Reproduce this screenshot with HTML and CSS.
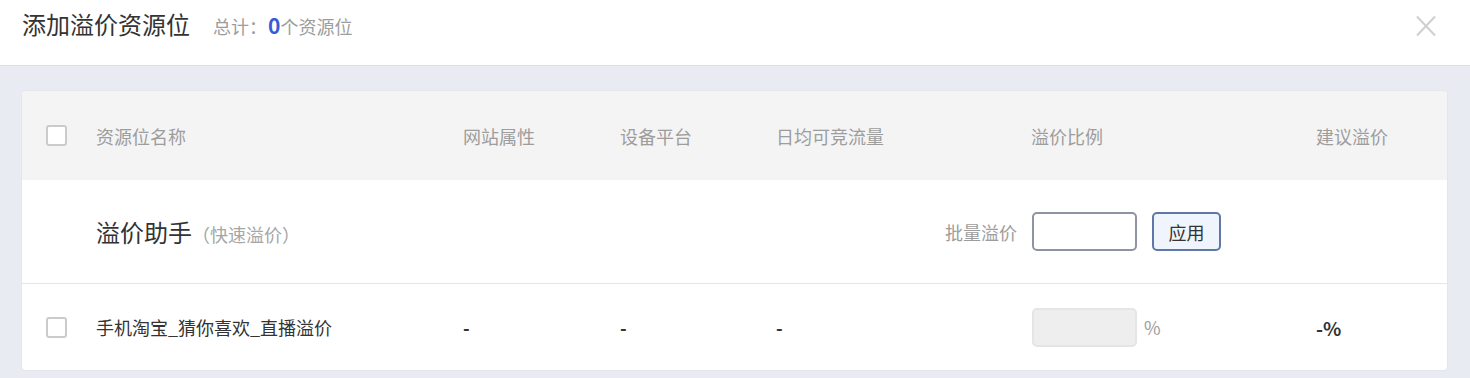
FILE: index.html
```html
<!DOCTYPE html>
<html lang="zh-CN">
<head>
<meta charset="utf-8">
<title>添加溢价资源位</title>
<link rel="stylesheet" href="styles.css">
</head>
<body>
<div class="dialog">
  <header class="dlg-head">
    <h1 class="dlg-title">添加溢价资源位</h1>
    <span class="dlg-total">总计：<b class="dlg-count">0</b>个资源位</span>
    <button class="dlg-close" type="button" aria-label="关闭">
      <svg width="20" height="22" viewBox="0 0 20 22"><path d="M1 1.5 L19 20.5 M19 1.5 L1 20.5" stroke="#cfcfcf" stroke-width="2" fill="none"/></svg>
    </button>
  </header>
  <main class="dlg-body">
    <section class="card">
      <div class="row row-head">
        <span class="cb"></span>
        <span class="c-name">资源位名称</span>
        <span>网站属性</span>
        <span>设备平台</span>
        <span>日均可竞流量</span>
        <span>溢价比例</span>
        <span>建议溢价</span>
      </div>
      <div class="row row-helper">
        <span class="helper-title">溢价助手<em class="helper-sub">（快速溢价）</em></span>
        <span class="helper-label">批量溢价</span>
        <span class="helper-ctrl">
          <input class="inp" type="text">
          <button class="btn-apply" type="button">应用</button>
        </span>
      </div>
      <div class="row row-data">
        <span class="cb"></span>
        <span class="c-name name-text">手机淘宝_猜你喜欢_直播溢价</span>
        <span class="dash">-</span>
        <span class="dash">-</span>
        <span class="dash">-</span>
        <span class="ratio"><input class="inp inp-disabled" type="text" disabled><span class="pct">%</span></span>
        <span class="dash dash-pct">-%</span>
      </div>
    </section>
  </main>
</div>
</body>
</html>
```

FILE: styles.css
```css
html, body {
  margin: 0;
  padding: 0;
}
body {
  font-family: "Noto Sans CJK SC", "Noto Sans", "Liberation Sans", sans-serif;
  background: #e8ebf2;
  color: #333;
  width: 1470px;
  height: 378px;
  overflow: hidden;
}
.dlg-head {
  height: 65px;
  background: #fff;
  border-bottom: 1px solid #dcdfe7;
  display: flex;
  align-items: baseline;
  padding: 0 22px;
  box-sizing: content-box;
}
.dlg-title {
  margin: 0;
  font-size: 24px;
  font-weight: normal;
  line-height: 48px;
  color: #333;
}
.dlg-total {
  margin-left: 23px;
  font-size: 18px;
  color: #9d9d9d;
}
.dlg-count {
  font-size: 21px;
  color: #3a5bd6;
  font-weight: bold;
  margin-left: 1px;
}
.dlg-close {
  margin-left: auto;
  align-self: flex-start;
  margin-top: 15px;
  margin-right: 12px;
  padding: 0;
  border: 0;
  background: none;
  width: 20px;
  height: 22px;
}
.dlg-close svg { display: block; }
.dlg-body {
  padding: 25px 23px 0 22px;
}
.card {
  background: #fff;
  border-radius: 4px;
  overflow: hidden;
  height: 279px;
  box-shadow: 0 0 0 1px #e3e6ec;
}
.row {
  display: grid;
  grid-template-columns: 50px 367px 157px 156px 255px 285px 1fr;
  align-items: center;
  padding-left: 24px;
  font-size: 18px;
}
.row-head {
  height: 89px;
  background: #f4f4f4;
  color: #9d9d9d;
}
.cb {
  width: 17px;
  height: 17px;
  border: 2px solid #cbcbcb;
  border-radius: 3px;
  background: #fff;
  display: block;
}
.row-helper {
  height: 103px;
  border-bottom: 1px solid #e6e6e6;
}
.helper-title {
  grid-column: 2 / 5;
  font-size: 24px;
  color: #333;
}
.helper-sub {
  font-style: normal;
  font-size: 18px;
  color: #a6a6a6;
  margin-left: 0;
}
.helper-label {
  grid-column: 5;
  justify-self: end;
  margin-right: 14px;
  color: #9d9d9d;
}
.helper-ctrl {
  grid-column: 6 / 8;
  display: flex;
  align-items: center;
  gap: 15px;
  padding-left: 1px;
}
.inp {
  width: 105px;
  height: 39px;
  box-sizing: border-box;
  border: 2px solid #8f94a3;
  border-radius: 5px;
  background: #fff;
  padding: 0 8px;
  font: inherit;
  outline: none;
}
.btn-apply {
  width: 69px;
  height: 39px;
  box-sizing: border-box;
  border: 2px solid #6078a8;
  border-radius: 5px;
  background: #eff4fd;
  font-family: inherit;
  font-size: 18px;
  color: #333;
  padding: 0;
}
.row-data {
  height: 86px;
}
.name-text {
  color: #333;
}
.dash {
  font-weight: bold;
  color: #333;
}
.dash-pct {
  font-size: 19px;
}
.ratio {
  display: flex;
  align-items: center;
  padding-left: 1px;
}
.inp-disabled {
  background: #eeeeee;
  border-color: #e5e5e5;
}
.pct {
  margin-left: 7px;
  color: #9d9d9d;
}
```
